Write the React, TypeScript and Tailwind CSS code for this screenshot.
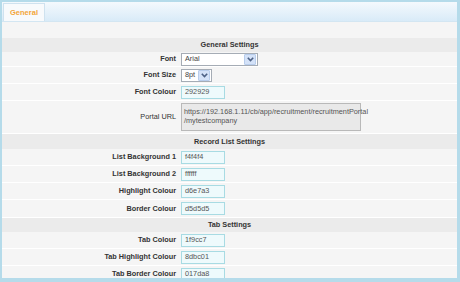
const Chevron = () => (
  <span className="flex h-[11px] w-[12px] items-center justify-center rounded-[1px] border border-[#b8cdec] bg-[#d4e2f8]">
    <svg width="7" height="5" viewBox="0 0 7 5">
      <path d="M0.8 0.8 L3.5 3.6 L6.2 0.8" fill="none" stroke="#4d6185" strokeWidth="1.6" />
    </svg>
  </span>
);

const SelectBox = ({ value, width }: { value: string; width: string }) => (
  <div className={`flex h-[13px] ${width} items-center justify-between border border-[#a5acb5] bg-white pl-[3px] pr-px text-[#444]`}>
    <span>{value}</span>
    <Chevron />
  </div>
);

const ColourInput = ({ value }: { value: string }) => (
  <div className="flex h-[13px] w-[44px] items-center border border-[#a8dbe3] bg-[#eefafc] pl-[3px] text-[#555]">
    {value}
  </div>
);

const Header = ({ title, h = "h-[14px]" }: { title: string; h?: string }) => (
  <div className={`flex ${h} shrink-0 items-center justify-center bg-[#ebebeb] font-bold text-[#333]`}>{title}</div>
);

const Row = ({
  label,
  children,
  bold = true,
  h = "h-[17px]",
}: {
  label: string;
  children: React.ReactNode;
  bold?: boolean;
  h?: string;
}) => (
  <div className={`flex ${h} shrink-0 items-center border-b border-white`}>
    <div className={`w-[175px] pr-[1px] text-right text-[#333] ${bold ? "font-bold" : ""}`}>{label}</div>
    <div className="pl-[4px]">{children}</div>
  </div>
);

export default function App() {
  return (
    <div className="h-[282px] w-[460px] bg-[#b5dbea] pb-[4px] pl-[2px] pr-[3px] pt-[2px] font-['Liberation_Sans',Arial,sans-serif] text-[7.3px] leading-none">
      <div className="flex h-full flex-col overflow-hidden bg-[#f5f5f5]">
        <div className="flex h-[20px] shrink-0 items-end border-b border-[#d3e6f2] bg-gradient-to-b from-[#f4f9fd] to-[#d9ebf8] pl-[1px]">
          <div className="flex h-[18px] w-[42px] items-center justify-center border border-b-0 border-[#cfe2ef] bg-[#f8fafc] text-[7.5px] font-bold text-[#f3a53a]">
            General
          </div>
        </div>
        <div className="h-[16px] shrink-0" />
        <Header title="General Settings" />
        <Row label="Font" h="h-[15px]">
          <SelectBox value="Arial" width="w-[77px]" />
        </Row>
        <Row label="Font Size">
          <SelectBox value="8pt" width="w-[31px]" />
        </Row>
        <Row label="Font Colour">
          <ColourInput value="292929" />
        </Row>
        <div className="flex h-[33px] shrink-0 items-center border-b border-white">
          <div className="w-[175px] pr-[1px] text-right text-[#333]">Portal URL</div>
          <div className="pl-[4px]">
            <div className="h-[28px] w-[180px] border border-[#b9b9b9] bg-[#e9e9e9] px-[2px] pt-[3px] leading-[9px] text-[#555]">
              https://192.168.1.11/cb/app/recruitment/recruitmentPortal
              <br />
              /mytestcompany
            </div>
          </div>
        </div>
        <Header title="Record List Settings" h="h-[15px]" />
        <Row label="List Background 1">
          <ColourInput value="f4f4f4" />
        </Row>
        <Row label="List Background 2">
          <ColourInput value="ffffff" />
        </Row>
        <Row label="Highlight Colour">
          <ColourInput value="d6e7a3" />
        </Row>
        <Row label="Border Colour" h="h-[18px]">
          <ColourInput value="d5d5d5" />
        </Row>
        <Header title="Tab Settings" />
        <Row label="Tab Colour">
          <ColourInput value="1f9cc7" />
        </Row>
        <Row label="Tab Highlight Colour">
          <ColourInput value="8dbc01" />
        </Row>
        <Row label="Tab Border Colour">
          <ColourInput value="017da8" />
        </Row>
      </div>
    </div>
  );
}
